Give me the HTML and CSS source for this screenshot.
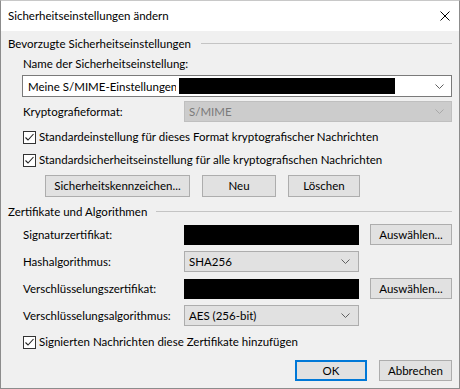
FILE: index.html
```html
<!DOCTYPE html>
<html lang="de">
<head>
<meta charset="utf-8">
<title>Sicherheitseinstellungen ändern</title>
<link rel="stylesheet" href="styles.css">
</head>
<body>
<div class="window">
  <div class="titlebar">
    <span class="title">Sicherheitseinstellungen ändern</span>
    <span class="close">
      <svg width="10" height="10" viewBox="0 0 10 10"><path d="M0.5 0.5 L9.5 9.5 M9.5 0.5 L0.5 9.5" stroke="#000" stroke-width="1" fill="none"/></svg>
    </span>
  </div>
  <div class="content">
    <div class="group-head g1"><span>Bevorzugte Sicherheitseinstellungen</span><i class="rule"></i></div>
    <div class="indent">
      <div class="label-row name-label">Name der Sicherheitseinstellung:</div>
      <div class="combo combo-main">
        <span class="combo-text fixed">Meine S/MIME-Einstellungen</span><span class="redact-inline"></span>
        <svg class="chev" width="9" height="5" viewBox="0 0 9 5"><path d="M0.5 0.5 L4.5 4.5 L8.5 0.5" stroke="#606060" fill="none"/></svg>
      </div>
      <div class="field-row krypto">
        <span class="lbl">Kryptografieformat:</span>
        <div class="combo combo-disabled">
          <span class="combo-text">S/MIME</span>
          <svg class="chev" width="9" height="5" viewBox="0 0 9 5"><path d="M0.5 0.5 L4.5 4.5 L8.5 0.5" stroke="#a8a8a8" fill="none"/></svg>
        </div>
      </div>
      <label class="check cb1"><span class="box"><svg width="11" height="11" viewBox="0 0 11 11"><path d="M1.5 5.5 L4 8 L9.5 2" stroke="#222" stroke-width="1.1" fill="none"/></svg></span>Standardeinstellung für dieses Format kryptografischer Nachrichten</label>
      <label class="check cb2"><span class="box"><svg width="11" height="11" viewBox="0 0 11 11"><path d="M1.5 5.5 L4 8 L9.5 2" stroke="#222" stroke-width="1.1" fill="none"/></svg></span>Standardsicherheitseinstellung für alle kryptografischen Nachrichten</label>
      <div class="btn-row">
        <button class="btn b-kenn">Sicherheitskennzeichen...</button>
        <button class="btn b-neu">Neu</button>
        <button class="btn b-del">Löschen</button>
      </div>
    </div>
    <div class="group-head g2"><span>Zertifikate und Algorithmen</span><i class="rule"></i></div>
    <div class="indent">
      <div class="grid">
        <span class="lbl">Signaturzertifikat:</span>
        <div class="redact"></div>
        <button class="btn b-sel">Auswählen...</button>

        <span class="lbl">Hashalgorithmus:</span>
        <div class="combo combo-btn">
          <span class="combo-text">SHA256</span>
          <svg class="chev" width="9" height="5" viewBox="0 0 9 5"><path d="M0.5 0.5 L4.5 4.5 L8.5 0.5" stroke="#606060" fill="none"/></svg>
        </div>
        <span></span>

        <span class="lbl">Verschlüsselungszertifikat:</span>
        <div class="redact"></div>
        <button class="btn b-sel">Auswählen...</button>

        <span class="lbl">Verschlüsselungsalgorithmus:</span>
        <div class="combo combo-btn">
          <span class="combo-text">AES (256-bit)</span>
          <svg class="chev" width="9" height="5" viewBox="0 0 9 5"><path d="M0.5 0.5 L4.5 4.5 L8.5 0.5" stroke="#606060" fill="none"/></svg>
        </div>
        <span></span>
      </div>
      <label class="check cb3"><span class="box"><svg width="11" height="11" viewBox="0 0 11 11"><path d="M1.5 5.5 L4 8 L9.5 2" stroke="#222" stroke-width="1.1" fill="none"/></svg></span>Signierten Nachrichten diese Zertifikate hinzufügen</label>
    </div>
    <div class="footer">
      <button class="btn btn-default">OK</button>
      <button class="btn b-cancel">Abbrechen</button>
    </div>
  </div>
</div>
</body>
</html>
```
FILE: styles.css
```css
* { box-sizing: border-box; }
html, body { margin: 0; padding: 0; background: #f0f0f0; }
body {
  font-family: Lato, "Segoe UI", sans-serif;
  font-size: 11.5px;
  color: #000;
}
.window {
  width: 460px;
  height: 389px;
  border: 1px solid #8c8c8c;
  border-top-color: #c8c8c8;
  background: #f0f0f0;
  display: flex;
  flex-direction: column;
}
.titlebar {
  height: 30px;
  background: #fff;
  display: flex;
  align-items: center;
  padding-left: 7px;
  padding-right: 9px;
  flex: none;
}
.title { flex: 1; font-size: 11.5px; line-height: 16px; }
.close { width: 10px; height: 10px; display: flex; }
.close svg { display: block; }

.content {
  flex: 1;
  padding: 0 7px 0 7px;
  display: flex;
  flex-direction: column;
}
.group-head {
  height: 14px;
  display: flex;
  align-items: center;
  line-height: 14px;
  white-space: nowrap;
}
.group-head .rule {
  flex: 1;
  height: 1px;
  background: #c4c4c4;
  margin-left: 10px;
  margin-top: -1px;
}
.g1 { margin-top: 6px; }
.g2 { margin-top: 8px; }
.g2 .rule { margin-left: 9px; }

.indent { padding-left: 15px; display: flex; flex-direction: column; }

.name-label { margin-top: 5px; height: 16px; line-height: 16px; }

.combo {
  display: flex;
  align-items: center;
  white-space: nowrap;
}
.combo .chev { margin-left: auto; display: block; flex: none; }
.combo-main {
  margin-top: 3px;
  margin-left: -1px;
  height: 22px;
  background: #fff;
  border: 1px solid #7a7a7a;
  padding: 0 7px 0 5px;
}
.fixed { width: 148px; overflow: hidden; flex: none; }
.redact-inline {
  display: inline-block;
  width: 216px;
  height: 16px;
  background: #000;
  margin-left: 3px;
  flex: none;
}
.field-row {
  display: grid;
  grid-template-columns: 161px 1fr;
  align-items: center;
}
.krypto { margin-top: 4px; height: 21px; }
.combo-disabled {
  height: 21px;
  background: #cccccc;
  border: 1px solid #bfbfbf;
  color: #7a7a7a;
  padding: 0 7px 0 4px;
}
.lbl { white-space: nowrap; line-height: 16px; }

.check {
  display: flex;
  align-items: center;
  height: 16px;
  line-height: 16px;
  white-space: nowrap;
}
.check .box {
  width: 13px;
  height: 13px;
  border: 1px solid #333;
  background: #fff;
  margin-right: 3px;
  display: flex;
  align-items: center;
  justify-content: center;
  flex: none;
}
.check .box svg { display: block; }
.cb1 { margin-top: 7px; }
.cb2 { margin-top: 7px; }
.cb3 { margin-top: 8px; }

.btn {
  font: inherit;
  color: #000;
  background: #e1e1e1;
  border: 1px solid #adadad;
  border-radius: 0;
  padding: 0;
  margin: 0;
  line-height: 16px;
  text-align: center;
  white-space: nowrap;
}
.btn-row {
  margin-top: 7px;
  display: flex;
  gap: 12px;
  padding-left: 22px;
}
.btn-row .btn { height: 22px; }
.b-kenn { width: 145px; }
.b-neu { width: 74px; }
.b-del { width: 72px; }

.grid {
  margin-top: 5px;
  display: grid;
  grid-template-columns: 161px 175px 1fr;
  row-gap: 6px;
  grid-auto-rows: 21px;
  align-items: center;
}
.redact { background: #000; height: 20px; }
.combo-btn {
  height: 21px;
  background: #e1e1e1;
  border: 1px solid #adadad;
  padding: 0 8px 0 4px;
}
.b-sel { height: 21px; width: 82px; justify-self: end; }

.footer {
  margin-top: 10px;
  display: flex;
  justify-content: flex-end;
  gap: 12px;
}
.footer .btn { height: 21px; }
.btn-default {
  width: 72px;
  border: 2px solid #0078d7;
}
.b-cancel { width: 73px; }
```
